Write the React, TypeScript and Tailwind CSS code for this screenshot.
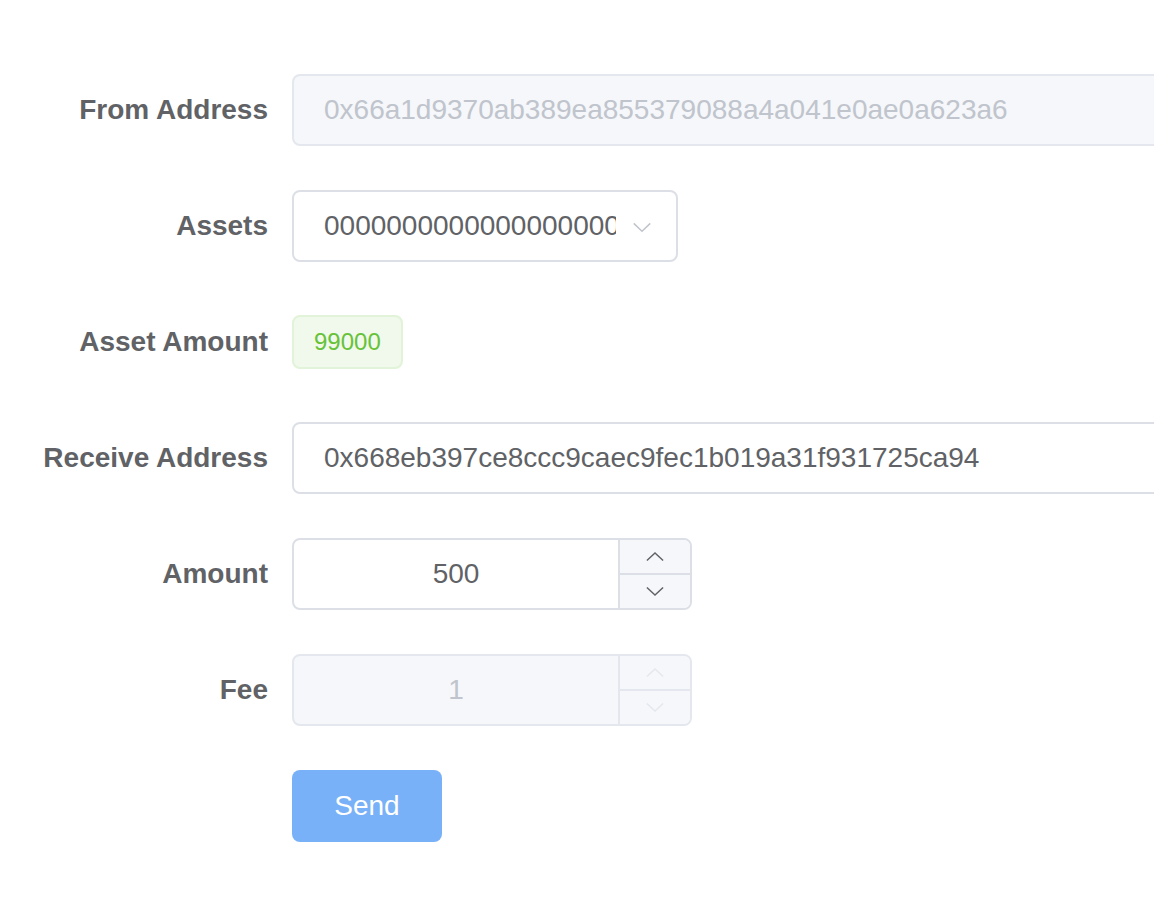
import React from 'react';

const ChevronDown = ({ className }: { className?: string }) => (
  <svg viewBox="0 0 20 12" className={className} fill="none" stroke="currentColor" strokeWidth="1.6">
    <path d="M1 1.5 L10 10 L19 1.5" />
  </svg>
);

const ChevronUp = ({ className }: { className?: string }) => (
  <svg viewBox="0 0 20 12" className={className} fill="none" stroke="currentColor" strokeWidth="1.6">
    <path d="M1 10.5 L10 2 L19 10.5" />
  </svg>
);

const Row = ({ label, children }: { label: string; children: React.ReactNode }) => (
  <div className="flex items-center h-[72px] mb-[44px]">
    <label className="w-[292px] shrink-0 pr-6 text-right text-[28px] font-bold text-[#606266]">{label}</label>
    {children}
  </div>
);

const NumberInput = ({ value, disabled }: { value: string; disabled?: boolean }) => (
  <div
    className={`flex w-[400px] h-[72px] rounded-lg border-2 overflow-hidden ${
      disabled ? 'border-[#e4e7ed] bg-[#f5f7fa]' : 'border-[#dcdfe6] bg-white'
    }`}
  >
    <div className={`flex-1 flex items-center justify-center text-[28px] ${disabled ? 'text-[#c0c4cc]' : 'text-[#606266]'}`}>
      {value}
    </div>
    <div className={`w-[72px] flex flex-col border-l-2 bg-[#f5f7fa] ${disabled ? 'border-[#e4e7ed]' : 'border-[#dcdfe6]'}`}>
      <div className={`flex-1 flex items-center justify-center border-b-2 ${disabled ? 'border-[#e4e7ed] text-[#e4e7ed]' : 'border-[#dcdfe6] text-[#606266]'}`}>
        <ChevronUp className="w-[18px] h-[11px]" />
      </div>
      <div className={`flex-1 flex items-center justify-center ${disabled ? 'text-[#e4e7ed]' : 'text-[#606266]'}`}>
        <ChevronDown className="w-[18px] h-[11px]" />
      </div>
    </div>
  </div>
);

export default function App() {
  return (
    <div className="min-h-screen w-full overflow-hidden bg-white" style={{ fontFamily: '"Liberation Sans", Arial, sans-serif' }}>
      <form className="pt-[74px]">
        <Row label="From Address">
          <div className="w-[900px] shrink-0 h-[72px] flex items-center px-[30px] rounded-lg border-2 border-[#e4e7ed] bg-[#f5f7fa] text-[28px] text-[#c0c4cc]">
            0x66a1d9370ab389ea855379088a4a041e0ae0a623a6
          </div>
        </Row>

        <Row label="Assets">
          <div className="relative w-[386px] h-[72px] flex items-center pl-[30px] pr-[60px] rounded-lg border-2 border-[#dcdfe6] bg-white text-[28px] text-[#606266]">
            <span className="block overflow-hidden whitespace-nowrap">0000000000000000000000000000</span>
            <ChevronDown className="absolute right-[24px] top-[30px] w-[20px] h-[11px] text-[#c0c4cc]" />
          </div>
        </Row>

        <Row label="Asset Amount">
          <span className="h-[54px] flex items-center px-[20px] rounded-lg border-2 border-[#e1f3d8] bg-[#f0f9eb] text-[24px] text-[#67c23a]">
            99000
          </span>
        </Row>

        <Row label="Receive Address">
          <div className="w-[900px] shrink-0 h-[72px] flex items-center px-[30px] rounded-lg border-2 border-[#dcdfe6] bg-white text-[28px] text-[#606266]">
            0x668eb397ce8ccc9caec9fec1b019a31f931725ca94
          </div>
        </Row>

        <Row label="Amount">
          <NumberInput value="500" />
        </Row>

        <Row label="Fee">
          <NumberInput value="1" disabled />
        </Row>

        <div className="flex">
          <div className="w-[292px] shrink-0" />
          <button type="button" className="w-[150px] h-[72px] rounded-lg bg-[#79b1f8] text-white text-[28px]">
            Send
          </button>
        </div>
      </form>
    </div>
  );
}
